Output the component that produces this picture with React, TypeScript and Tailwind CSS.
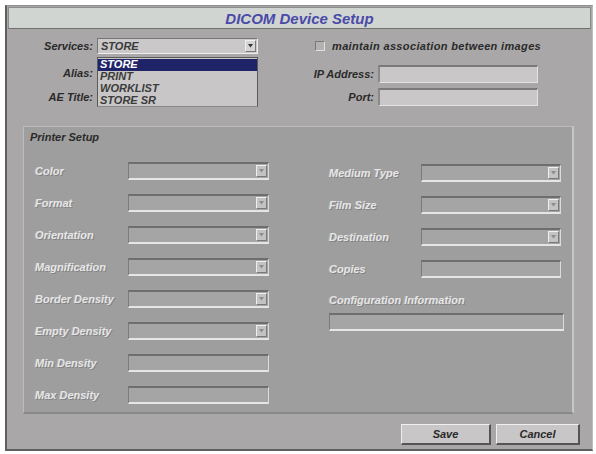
import React from "react";

const font = { fontFamily: '"Liberation Sans", Arial, sans-serif' };

function ArrowBox({ disabled }: { disabled?: boolean }) {
  return (
    <div
      className={
        "h-full w-[11px] flex items-center justify-center border-l border-t border-[#f0f0f0] border-r border-b border-r-[#7a7a7a] border-b-[#7a7a7a] " +
        (disabled ? "bg-[#c4c3c3]" : "bg-[#d6d5d5]")
      }
    >
      <svg width="5" height="4" viewBox="0 0 5 4">
        <path d="M0 0 L5 0 L2.5 3.5 Z" fill={disabled ? "#8c8c8c" : "#333"} />
      </svg>
    </div>
  );
}

function TopInput({ w }: { w: string }) {
  return (
    <div
      className={
        w +
        " h-[18px] bg-[#c9c7c7] border-t-2 border-l-2 border-t-[#7b7979] border-l-[#8a8888] border-b border-r border-b-[#e4e2e2] border-r-[#e4e2e2]"
      }
    />
  );
}

function DisabledSelect({ w }: { w: string }) {
  return (
    <div
      className={
        w +
        " h-[18px] flex items-stretch bg-[#a6a5a5] border-t-2 border-l border-t-[#6f6e6e] border-l-[#7d7c7c] border-b-2 border-r border-b-[#e6e5e5] border-r-[#dcdbdb] pr-[1px] py-[1px]"
      }
    >
      <div className="flex-1" />
      <ArrowBox disabled />
    </div>
  );
}

function DisabledInput({ w }: { w: string }) {
  return (
    <div
      className={
        w +
        " h-[18px] bg-[#a6a5a5] border-t-2 border-l border-t-[#6f6e6e] border-l-[#7d7c7c] border-b-2 border-r border-b-[#e6e5e5] border-r-[#dcdbdb]"
      }
    />
  );
}

function DimLabel({ children, w }: { children: React.ReactNode; w: string }) {
  return (
    <div
      className={
        w +
        " text-[11px] italic font-bold text-[#e6e6e6] [text-shadow:1px_1px_0_#838383,-1px_0_0_#b0b0b0] leading-none whitespace-nowrap"
      }
    >
      {children}
    </div>
  );
}

const leftRows: { label: string; select: boolean }[] = [
  { label: "Color", select: true },
  { label: "Format", select: true },
  { label: "Orientation", select: true },
  { label: "Magnification", select: true },
  { label: "Border Density", select: true },
  { label: "Empty Density", select: true },
  { label: "Min Density", select: false },
  { label: "Max Density", select: false },
];

const rightRows: { label: string; select: boolean }[] = [
  { label: "Medium Type", select: true },
  { label: "Film Size", select: true },
  { label: "Destination", select: true },
  { label: "Copies", select: false },
];

const services = ["STORE", "PRINT", "WORKLIST", "STORE SR"];

const label = "text-[11px] font-bold italic text-[#2a2a2a] leading-none whitespace-nowrap";

export default function App() {
  return (
    <div className="w-[596px] h-[454px] bg-white pt-[5px] pl-[5px]" style={font}>
      <div className="w-[588px] h-[446px] bg-[#a9a7a7] border-l-2 border-b-2 border-t border-r border-l-[#5e5e5e] border-b-[#5e5e5e] border-t-[#8e8e8e] border-r-[#bdbdbd] flex flex-col">
        {/* title bar */}
        <div className="mx-[1px] mt-[1px] h-[22px] bg-[#d1d5d2] border border-[#8b8d8b] border-b-[#6f716f] flex items-center justify-center">
          <span className="text-[15px] font-bold italic text-[#4a4aa8] leading-none">
            DICOM Device Setup
          </span>
        </div>

        {/* connection settings */}
        <div className="flex mt-[9px]">
          <div className="flex flex-col">
            <div className="flex items-center h-[16px]">
              <div className={"w-[90px] pr-[4px] text-right " + label}>Services:</div>
              <div className="relative w-[161px] h-[16px]">
                <div className="w-full h-full flex items-stretch bg-[#cac8c8] border-t border-l border-[#777] border-b border-r border-b-[#eee] border-r-[#eee] py-[1px] pr-[1px]">
                  <div className="flex-1 pl-[3px] flex items-center text-[11px] font-bold italic text-[#3a3a3a] leading-none">
                    STORE
                  </div>
                  <ArrowBox />
                </div>
                {/* open option list */}
                <div className="absolute left-0 top-[19px] w-[161px] h-[50px] bg-[#c8c6c6] border border-[#5a5a5a] border-b-[#8a8a8a] z-10 flex flex-col pt-[1px]">
                  {services.map((s, i) => (
                    <div
                      key={s}
                      className={
                        "h-[12px] pl-[2px] flex items-center text-[11px] italic font-bold leading-none " +
                        (i === 0 ? "bg-[#1f2468] text-white" : "text-[#3c3c3c]")
                      }
                    >
                      {s}
                    </div>
                  ))}
                </div>
              </div>
            </div>
            <div className="flex items-center h-[18px] mt-[10px]">
              <div className={"w-[90px] pr-[4px] text-right " + label}>Alias:</div>
              <TopInput w="w-[161px]" />
            </div>
            <div className="flex items-center h-[18px] mt-[6px]">
              <div className={"w-[90px] pr-[4px] text-right " + label}>AE Title:</div>
              <TopInput w="w-[161px]" />
            </div>
          </div>

          <div className="flex flex-col ml-[54px]">
            <div className="flex items-center h-[16px] pl-[3px]">
              <div className="w-[10px] h-[10px] bg-[#b3b1b1] border-t border-l border-[#7a7a7a] border-b border-r border-b-[#e0e0e0] border-r-[#e0e0e0]" />
              <span className={"ml-[7px] tracking-[0.35px] " + label}>
                maintain association between images
              </span>
            </div>
            <div className="flex items-center h-[18px] mt-[11px]">
              <div className={"w-[66px] pr-[4px] text-right " + label}>IP Address:</div>
              <TopInput w="w-[160px]" />
            </div>
            <div className="flex items-center h-[18px] mt-[5px]">
              <div className={"w-[66px] pr-[4px] text-right " + label}>Port:</div>
              <TopInput w="w-[160px]" />
            </div>
          </div>
        </div>

        {/* printer settings (disabled) */}
        <div className="ml-[16px] mt-[20px] w-[551px] h-[288px] bg-[#9f9e9e] border-t border-l border-[#bdbcbc] border-b-2 border-r-2 border-b-[#8a8989] border-r-[#c8c7c7] flex flex-col">
          <div className={"pl-[6px] pt-[5px] " + label}>Printer Setup</div>
          <div className="flex mt-[19px]">
            <div className="flex flex-col gap-[14px] pl-[11px]">
              {leftRows.map((r) => (
                <div key={r.label} className="flex items-center h-[18px]">
                  <DimLabel w="w-[93px]">{r.label}</DimLabel>
                  {r.select ? <DisabledSelect w="w-[141px]" /> : <DisabledInput w="w-[141px]" />}
                </div>
              ))}
            </div>
            <div className="flex flex-col ml-[60px] mt-[2px]">
              <div className="flex flex-col gap-[14px]">
                {rightRows.map((r) => (
                  <div key={r.label} className="flex items-center h-[18px]">
                    <DimLabel w="w-[92px]">{r.label}</DimLabel>
                    {r.select ? <DisabledSelect w="w-[140px]" /> : <DisabledInput w="w-[140px]" />}
                  </div>
                ))}
              </div>
              <div className="mt-[17px]">
                <DimLabel w="w-[200px]">Configuration Information</DimLabel>
              </div>
              <div className="mt-[7px]">
                <DisabledInput w="w-[235px]" />
              </div>
            </div>
          </div>
        </div>

        {/* actions */}
        <div className="flex justify-end gap-[5px] mt-[10px] pr-[12px]">
          <button className={"w-[90px] h-[21px] bg-[#c8c6c6] border-t border-l border-[#efefef] border-b-2 border-r-2 border-b-[#555] border-r-[#555] " + label}>
            Save
          </button>
          <button className={"w-[84px] h-[21px] bg-[#c8c6c6] border-t border-l border-[#efefef] border-b-2 border-r-2 border-b-[#555] border-r-[#555] " + label}>
            Cancel
          </button>
        </div>
      </div>
    </div>
  );
}
